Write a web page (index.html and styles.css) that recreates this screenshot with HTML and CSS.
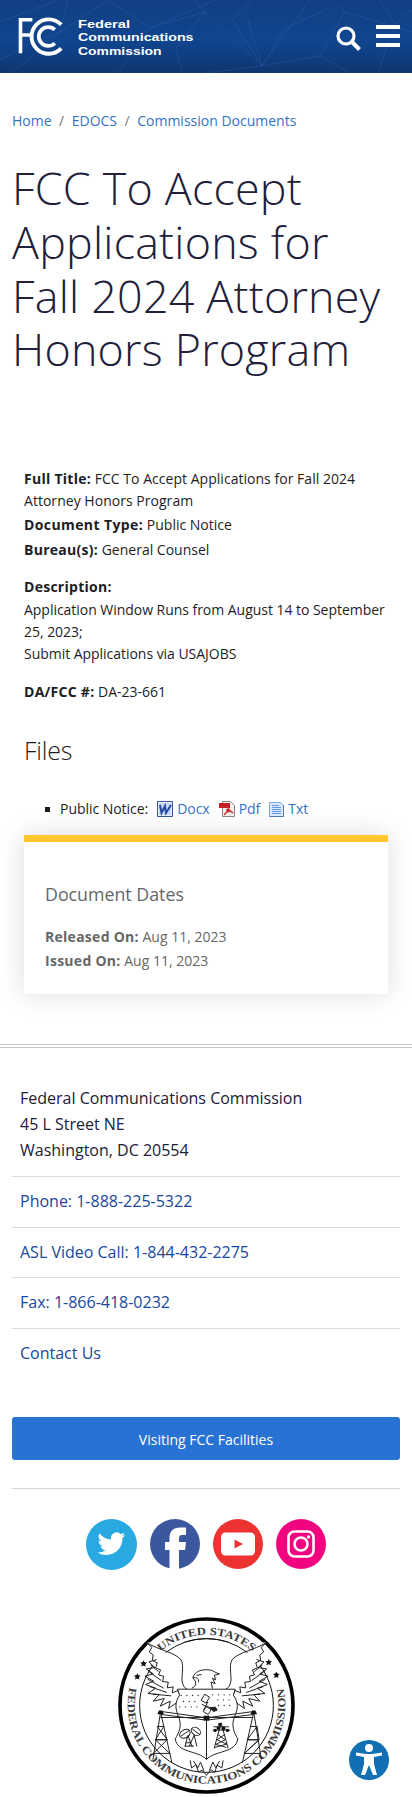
FILE: index.html
```html
<!DOCTYPE html>
<html lang="en">
<head>
<meta charset="utf-8">
<title>FCC To Accept Applications for Fall 2024 Attorney Honors Program</title>
<link rel="stylesheet" href="styles.css">
</head>
<body>
<header class="site-header">
  <svg class="header-web" viewBox="0 0 412 73" preserveAspectRatio="none" aria-hidden="true">
    <g fill="none" stroke="#3c6eb8" stroke-opacity=".28" stroke-width="1">
      <path d="M0 22 58 0M68 0 60 32 12 73M108 0 150 28 215 0M150 28 118 73M150 28 205 12 262 66 205 73M205 12 195 0M262 66 232 20 252 0M262 66 310 0M262 66 248 20M262 66 285 28 330 8M262 66 320 56 345 12 412 32M320 56 350 73M345 12 332 0M0 60 34 42 60 32 108 0M380 0 395 24 412 10M395 24 378 73M205 12 176 48 182 73"/>
    </g>
  </svg>
  <a class="logo" href="#">
    <svg viewBox="0 0 180 42" width="180" height="42" aria-label="Federal Communications Commission">
      <g fill="none" stroke="#fff" transform="translate(-.6 1.200)">
        <path d="M15 2.600H3.100V36" stroke-width="3.600"/><path d="M4 17.800H13" stroke-width="3.400"/>
        <path d="M43.800 7.500A17.200 17.200 0 1 0 43.800 31.200" stroke-width="3.900"/>
        <path d="M37.400 12.600A9.400 9.400 0 1 0 37.400 26" stroke-width="3.700"/>
      </g>
      <g class="logo-text">
        <text x="60" y="12" textLength="52" lengthAdjust="spacingAndGlyphs">Federal</text>
        <text x="60" y="25.300" textLength="115.500" lengthAdjust="spacingAndGlyphs">Communications</text>
        <text x="60" y="38.700" textLength="83.500" lengthAdjust="spacingAndGlyphs">Commission</text>
      </g>
    </svg>
  </a>
  <nav class="tools">
    <svg width="25" height="26" viewBox="0 0 25 26" fill="none" stroke="#fff"><circle cx="10" cy="10" r="8" stroke-width="3.200"/><path d="m15.500 15.500 8 8" stroke-width="4"/></svg>
    <svg class="menu" width="24" height="22" viewBox="0 0 24 22" fill="#fff"><path d="M0 0h24v4H0zM0 9h24v4H0zM0 18h24v4H0z"/></svg>
  </nav>
</header>
<main>
  <nav class="crumbs"><a href="#">Home</a><span>/</span><a href="#">EDOCS</a><span>/</span><a href="#">Commission Documents</a></nav>
  <h1>FCC To Accept Applications for Fall 2024 Attorney Honors Program</h1>
  <div class="document">
    <p class="title"><b>Full Title:</b> FCC To Accept Applications for Fall 2024 Attorney Honors Program</p>
    <p class="type"><b>Document Type:</b> Public Notice</p>
    <p class="bureau"><b>Bureau(s):</b> General Counsel</p>
    <p class="label"><b>Description:</b></p>
    <p class="description">Application Window Runs from August 14 to September 25, 2023;<br>Submit Applications via USAJOBS</p>
    <p class="number"><b>DA/FCC #:</b> DA-23-661</p>
    <h2>Files</h2>
    <div class="files">
      <i class="bullet"></i><span>Public Notice:</span>
      <a class="file docx" href="#"><svg width="16" height="16" viewBox="0 0 16 16"><path fill="#e9effb" stroke="#35569f" d="M.5.5h15v15H.5z"/><path fill="#c9d8f2" d="M2 2h12v12H2z"/><path d="m3 4 1.500 8L8 5l1 7 5-8" fill="none" stroke="#234a9b" stroke-width="2"/></svg>Docx</a>
      <a class="file pdf" href="#"><svg width="16" height="16" viewBox="0 0 16 16"><path fill="#f4efed" stroke="#8b807d" d="M3.500.5h8l4 4v11h-12z"/><path fill="#c81e25" d="M0 2h11v5H0z"/><path d="M8 4c3 4 0 7-3 10m2-5c3-1 5 1 7 3M9 7l2 3-5 2" fill="none" stroke="#c9252b" stroke-width="1.200"/></svg>Pdf</a>
      <a class="file txt" href="#"><svg width="15" height="16" viewBox="0 0 15 16"><path fill="#d9e8fb" stroke="#82a9dc" d="M.5 1.500h11l3 3v11H.5z"/><path d="M14.500 4v11.500H.5" fill="none" stroke="#5577b0"/><path d="M3 4.500h7M3 6.500h9M3 8.500h9M3 10.500h9M3 12.500h9" stroke="#6797d8"/></svg>Txt</a>
    </div>
    <section class="dates">
      <h3>Document Dates</h3>
      <p><b>Released On:</b> Aug 11, 2023</p>
      <p><b>Issued On:</b> Aug 11, 2023</p>
    </section>
  </div>
</main>
<footer>
  <address>Federal Communications Commission<br>45 L Street NE<br>Washington, DC 20554</address>
  <a class="contact" href="#">Phone: 1-888-225-5322</a>
  <a class="contact" href="#">ASL Video Call: 1-844-432-2275</a>
  <a class="contact" href="#">Fax: 1-866-418-0232</a>
  <a class="contact" href="#">Contact Us</a>
  <a class="visit" href="#">Visiting FCC Facilities</a>
  <div class="social">
    <svg width="51" height="51" viewBox="0 0 51 51"><circle cx="25.500" cy="25.500" r="25.500" fill="#29a9e1"/><path fill="#fff" transform="translate(11.500 10.800) scale(1.160)" d="M23.950 4.570a10 10 0 0 1-2.820.77 4.960 4.960 0 0 0 2.160-2.720c-.95.550-2 .95-3.130 1.180a4.920 4.920 0 0 0-8.380 4.480C7.690 8.090 4.070 6.130 1.640 3.160a4.920 4.920 0 0 0 1.520 6.570 4.900 4.900 0 0 1-2.230-.61v.06a4.920 4.920 0 0 0 3.950 4.830 5 5 0 0 1-2.210.08 4.940 4.940 0 0 0 4.600 3.420A9.870 9.870 0 0 1 0 19.540a13.990 13.990 0 0 0 7.550 2.210c9.050 0 14-7.500 14-13.980l-.02-.63a9.940 9.940 0 0 0 2.460-2.550z"/></svg>
    <svg width="50" height="50" viewBox="0 0 50 50"><circle cx="25" cy="25" r="25" fill="#3b579d"/><path fill="#fff" d="M19.500 50V31H15v-8h4.500v-4c0-7 4-10.500 10.500-10.500h6V16h-3.500c-3 0-3.500 1.500-3.500 4v3h7l-1 8h-6v19z"/></svg>
    <svg width="50" height="50" viewBox="0 0 50 50"><circle cx="25" cy="25" r="25" fill="#ed3232"/><rect x="8" y="13.500" width="34" height="23" rx="4.500" fill="#fff"/><path fill="#ed3232" d="m21.500 20.500 8.500 4.500-8.500 4.500z"/></svg>
    <svg width="50" height="50" viewBox="0 0 50 50"><circle cx="25" cy="25" r="25" fill="#f0047f"/><g fill="none" stroke="#fff" stroke-width="2.600"><rect x="12.500" y="12.500" width="25" height="25" rx="6"/><circle cx="25" cy="25" r="6.500"/></g><circle cx="32.500" cy="18" r="1.700" fill="#fff"/></svg>
  </div>
  <svg class="seal" viewBox="50 49 532 532" width="177" height="177" aria-label="Seal of the Federal Communications Commission">
    <defs>
      <path id="seal-arc" d="M178 153A213 213 0 0 1 457 156"/>
      <path id="seal-bottom" d="M85 260A237 237 0 1 0 547 260"/>
    </defs>
    <circle cx="316" cy="315" r="260" fill="#fff" stroke="#000" stroke-width="11"/>
    <circle cx="316" cy="315" r="201" fill="none" stroke="#111" stroke-width="3"/>
    <path d="M138 126 494 126 470 220H158z" fill="#fff"/>
    <path d="M193 156A201 201 0 0 1 439 156" fill="none" stroke="#111" stroke-width="3"/>
    <g class="seal-text">
      <text><textPath href="#seal-arc" textLength="300" lengthAdjust="spacingAndGlyphs">UNITED STATES</textPath></text>
      <text><textPath href="#seal-bottom" textLength="848" lengthAdjust="spacingAndGlyphs">FEDERAL COMMUNICATIONS COMMISSION</textPath></text>
    </g>
    <g fill="none" stroke="#222" stroke-width="3" stroke-linejoin="round">
      <g id="wing"><path d="M136 126c40 24 82 28 103 51 12 20-2 57 6 74 4 9 7 13 13 15l-20 22-8-18-17 7 3-18-18 3 3-17-17-2 3-16-15-4 6-15-15-6 5-15-15-8 3-16-12-9 8-14z"/>
      <path d="m166 177-23 7 18 17-26 4 21 15-25 7 26 15-24 10 30 11-23 16 34 3-18 20 33-8-12 23 30-15-5 22 28-20M148 193l24 20M140 211l40 29M139 236l48 27M145 258l52 18M155 281l55 5"/></g>
      <use href="#wing" transform="matrix(-1 0 0 1 632 0)"/>
      <path fill="#fff" d="M229 266H402l-5 18c15 24 15 38 3 65-10 25-2 47 10 66-6 44-67 34-94 62-26-28-88-18-94-62 12-19 21-41 10-66-11-27-11-43 3-65z"/>
      <path d="M272 263c13-6 13-13 10-22l-7-9c4-18 24-27 51-24 12 2 18 10 29 12l-15 4 3 14-9-5 8 17-12-6 4 20M275 232c12-2 19 2 17 13M286 224l15-2M316 350v127M180 333l136 19 142-19M180 342l136 17 142-17M177 351h130M325 351h132"/>
      <path d="m178 335-23 143M178 335l34 152M168 378h20l-26 40h36l-42 41h51M168 378l30 40-36 0M162 418l44 41M458 335l-34 152M458 335l23 143M448 378h20l-30 40h36l-44 41h50M468 378l6 40-36 0M474 418l-44 41"/>
      <path d="M267 480l4 23 13-10 8 22 12-6 12 16 13-17 12 8 7-22 14 9 4-23M277 482l13 20 8-17 10 25M355 482l-11 20-9-17-10 25"/>
      <ellipse cx="251" cy="400" rx="17" ry="12" transform="rotate(-30 251 400)"/><ellipse cx="284" cy="393" rx="15" ry="11" transform="rotate(35 284 393)"/>
      <path d="m239 407 24-16M273 385l22 17M260 405l-9 34m9-34 13 34m-19-12h15m-18 10h27M279 404l-15 34m15-34 8 34M360 367l-21 77m21-77 21 77M337 379h46M335 389h52M350 402l22 16-28 14 32 9M371 402l-23 16 29 13-36 10"/>
      <g fill="#fff"><path d="m302 311 27 15m-9-22-13 25m4-48 14 9-10 18-15-9zm6 35 14 9-10 17-15-9z"/></g>
      <path d="M325 322l18-2 5 9-11 4z" fill="#222"/>
    </g>
    <g fill="#111"><path id="star" d="m127 179 3 6 7 1-5 5 1 7-6-3-7 3 2-7-5-5 7-1z"/><use href="#star" x="-19" y="39"/><use href="#star" x="376" y="-4"/><use href="#star" x="399" y="34"/>
      <path stroke="#222" stroke-width="4" stroke-linecap="round" stroke-dasharray="0 17" fill="none" d="M240 285h62M247 303h45M236 319h65M335 283h60M350 298h47M352 315h50"/>
      <path d="M173 330h10l5 11h-20zM453 330h10l5 11h-20zM307 346h18v14h-18z"/>
      <circle cx="352" cy="383" r="6"/><circle cx="367" cy="384" r="6"/><circle cx="342" cy="390" r="5"/><circle cx="379" cy="390" r="5"/><circle cx="356" cy="372" r="5"/>
    </g>
  </svg>
</footer>
<svg class="accessibility" viewBox="0 0 40 40" width="40" height="40" aria-label="Accessibility"><circle cx="20" cy="20" r="20" fill="#1170b4"/><g fill="#fff"><circle cx="20" cy="8" r="4"/><path d="M7 12.500 17 14h6l10-1.500v3L25 17v7l3 11h-4l-4-10-4 10h-4l3-11v-7L7 15.500z"/></g></svg>
</body>
</html>
```
FILE: styles.css
```css
* { box-sizing: border-box; }
body { position: relative; height: 1797px; margin: 0; overflow: hidden; background: #fff; color: #1d1d1f; font: 14px/22px "Open Sans", sans-serif; }
h1, h2, h3, p { margin: 0; }
a { color: #3373c4; text-decoration: none; }
b { letter-spacing: .27px; }
svg { display: block; flex: none; }
.site-header { position: relative; display: flex; justify-content: space-between; height: 73px; padding: 16px 12px 0 17.500px; background: linear-gradient(#123f82, #10458f 55%, #0f366f); }
.header-web { position: absolute; inset: 0; width: 100%; height: 100%; }
.logo, .tools { position: relative; }
.logo-text { fill: #fff; font: 700 11px "Liberation Sans", sans-serif; }
.tools { display: flex; gap: 15px; padding-top: 10px; }
.menu { margin-top: -1px; }
main { padding: 37px 12px 0; }
.crumbs { display: flex; gap: 7.500px; }
.crumbs span { color: #777; }
h1 { margin-top: 29px; color: #20203a; font-size: 44.800px; font-weight: 300; line-height: 53.760px; letter-spacing: .23px; }
.document { margin: 92px 12px 0; }
.title { letter-spacing: .03px; }
.type { margin-top: 2px; }
.type b { letter-spacing: .4px; }
.bureau { margin-top: 3px; }
.label { margin-top: 15px; }
.description { margin-top: 1px; letter-spacing: -.035px; }
.number { margin-top: 16px; }
h2 { margin-top: 29px; font-size: 25px; font-weight: 300; line-height: 36px; letter-spacing: -.2px; }
.files { display: flex; align-items: center; margin-top: 30px; padding-left: 21px; letter-spacing: -.04px; }
.bullet { width: 5px; height: 5px; margin-right: 10px; background: #1d1d1f; }
.file { display: flex; align-items: center; gap: 4px; margin-left: 9px; }
.dates { height: 159px; margin-top: 15px; padding: 40px 21px; border-top: 7px solid #ffc72f; background: #fff; box-shadow: 0 0 25px rgba(0, 0, 0, .14); color: #666; line-height: 24px; }
.dates h3 { margin-bottom: 19px; font-size: 17.800px; font-weight: 400; line-height: 24px; }
footer { margin-top: 50px; padding: 37px 12px 0; border-top: 4px double #c7c7ca; font-size: 16px; }
address { padding: 0 8px 13px; color: #20203a; font-style: normal; line-height: 26px; }
.contact { display: block; padding: 12px 8px; border-top: 1px solid #dcdce0; color: #17479e; line-height: 25.700px; }
.visit { display: block; height: 43px; margin-top: 38px; border-radius: 3px; background: #2872d3; color: #fff; font-size: 14px; line-height: 45px; text-align: center; }
.social { display: flex; align-items: flex-start; justify-content: center; gap: 13px; height: 129px; margin-top: 28px; padding-top: 30px; border-top: 1px solid #d5d5df; }
.seal { margin: 0 auto; }
.seal-text { font: 700 33px "Liberation Serif", serif; fill: #3a3a3a; }
.accessibility { position: absolute; top: 1740px; left: 349px; }
```
